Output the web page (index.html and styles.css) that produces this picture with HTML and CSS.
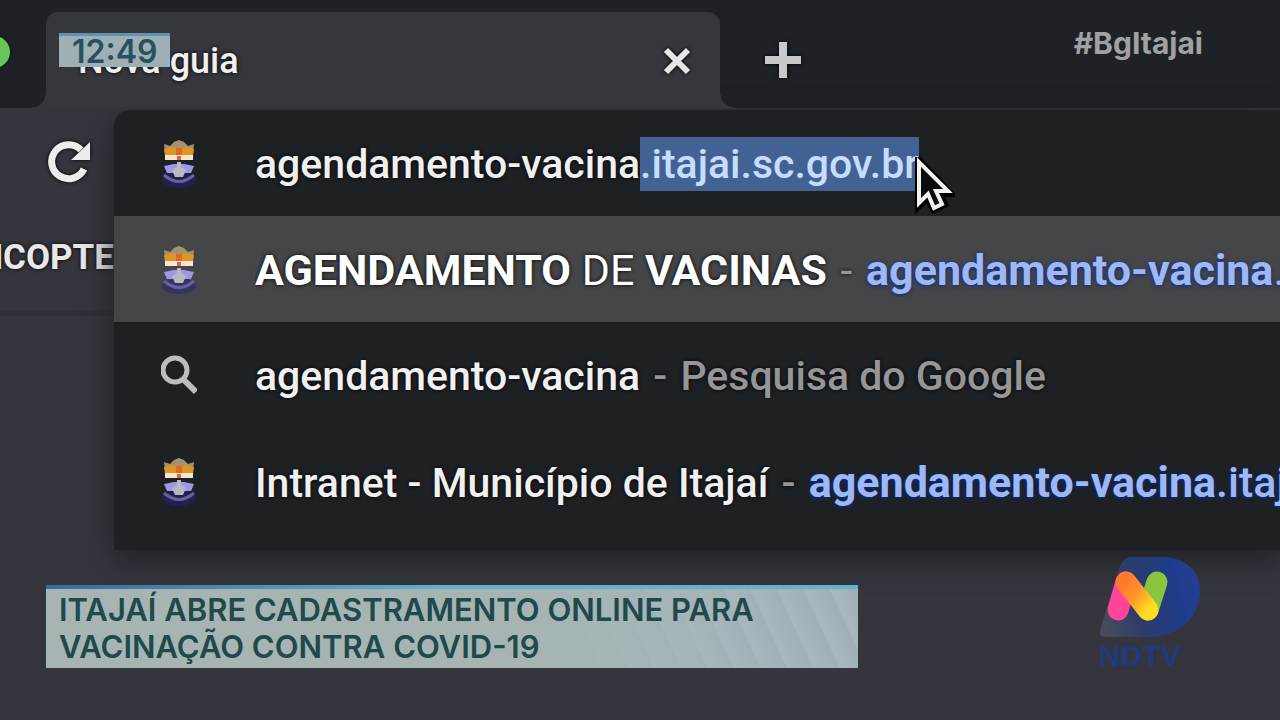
FILE: index.html
```
<!DOCTYPE html>
<html lang="pt-BR">

<head>
  <meta charset="UTF-8">
  <meta name="viewport" content="width=device-width, initial-scale=1.0">
  <title>Nova guia</title>
  <link rel="stylesheet" href="styles.css">
</head>

<body>
  <!-- brasão de Itajaí, usado como favicon -->
  <svg class="defs" width="0" height="0" aria-hidden="true">
    <symbol id="crest" viewBox="0 0 36 52">
      <ellipse cx="18" cy="42" rx="17" ry="8" fill="#25207a" opacity=".5" />
      <path d="M3 6l6 2 4-4 5-2 5 2 4 4 6-2-1 8H4z" fill="#a3936f" />
      <path d="M3 11l8-2 7 2 7-2 8 2-1 7H4z" fill="#dc9526" />
      <path d="M15 10h6v7h-6z" fill="#e2671a" />
      <path d="M4 17h28v5H4z" fill="#fbe5cf" />
      <path d="M16 18h4v4h-4z" fill="#d8674e" />
      <path d="M3 28l10-2h10l10 2-3 7H6z" fill="#9c9ae6" />
      <path d="M16 24h4v5l5 3-3 7h-8l-3-7 5-3z" fill="#b9b9c4" />
      <path d="M3 37q15 13 30 0" fill="none" stroke="#65629f" stroke-width="3" />
    </symbol>
  </svg>

  <div class="browser">
    <header class="tabstrip">
      <span class="maximize"></span>
      <div class="tab">
        <span class="tab-title">Nova guia</span>
        <button class="icon-btn" aria-label="Fechar guia">
          <svg width="30" height="30" viewBox="0 0 30 30">
            <path d="M4 4l22 22M26 4L4 26" stroke="#e6e6e6" stroke-width="6" />
          </svg>
        </button>
      </div>
      <button class="icon-btn new-tab" aria-label="Nova guia">
        <svg width="38" height="38" viewBox="0 0 38 38">
          <path d="M19 1v36M1 19h36" stroke="#c9c9c9" stroke-width="8" />
        </svg>
      </button>
    </header>

    <main class="content">
      <aside class="side">
        <button class="icon-btn reload" aria-label="Recarregar">
          <svg width="46" height="46" viewBox="0 0 46 46">
            <path d="M38 30A17 17 0 1 1 35 11" fill="none" stroke="#ececec" stroke-width="7" />
            <path d="M44 3v18H25z" fill="#ececec" />
          </svg>
        </button>
        <a class="bookmark" href="#">MCOPTE</a>
      </aside>

      <div class="omnibox">
        <div class="row">
          <svg class="icon"><use href="#crest" /></svg>
          <input id="url" class="url" type="text" aria-label="Endereço" value="agendamento-vacina.itajai.sc.gov.br" spellcheck="false" autofocus>
        </div>
        <a class="row active" href="#">
          <svg class="icon"><use href="#crest" /></svg>
          <span class="text"><b>AGENDAMENTO</b> DE <b>VACINAS</b> <i class="dash">-</i> <em><b>agendamento-vacina</b>.itajai.sc.gov.br</em></span>
        </a>
        <a class="row" href="#">
          <svg class="icon" viewBox="0 0 36 52">
            <circle cx="14" cy="20" r="12" fill="none" stroke="#bdbdbd" stroke-width="5" />
            <path d="M22 29l13 13" stroke="#bdbdbd" stroke-width="6" />
          </svg>
          <span class="text">agendamento-vacina <i class="dash">-</i> <i>Pesquisa do Google</i></span>
        </a>
        <a class="row" href="#">
          <svg class="icon"><use href="#crest" /></svg>
          <span class="text">Intranet - Município de Itajaí <i class="dash">-</i> <em><b>agendamento-vacina</b>.itajai.sc.gov.br</em></span>
        </a>
      </div>
    </main>

    <svg class="cursor" width="40" height="60" viewBox="0 0 40 60">
      <path d="M4 4v44l9-8 6 12 10-5-6-11h11z" fill="#0b0c10" stroke="#000" stroke-width="8" />
      <path d="M4 5v41l9-9 6 14 8-4-6-13h12z" fill="#0b0c10" stroke="#f2f2f2" stroke-width="4" />
    </svg>
  </div>

  <div class="clock">12:49</div>
  <div class="hashtag">#BgItajai</div>
  <h1 class="headline">ITAJAÍ ABRE CADASTRAMENTO ONLINE PARA<br>VACINAÇÃO CONTRA COVID-19</h1>

  <div class="logo">
    <svg width="102" height="82" viewBox="0 0 102 82">
      <defs>
        <linearGradient id="shape" x1="0" y1=".5" x2="1" y2=".3">
          <stop offset="0" stop-color="#454b5c" />
          <stop offset=".35" stop-color="#2b3c6b" />
          <stop offset=".75" stop-color="#1f3c8c" />
          <stop offset="1" stop-color="#243f94" />
        </linearGradient>
        <linearGradient id="bar" x1="0" y1="0" x2="1" y2="1">
          <stop offset="0" stop-color="#ff7a2c" />
          <stop offset=".5" stop-color="#ff9a2a" />
          <stop offset="1" stop-color="#ffdd1f" />
        </linearGradient>
      </defs>
      <path d="M32 1h30c24 0 39 14 39 33 0 28-22 47-51 47H6q-6 0-5-7L21 10q4-9 11-9z" fill="url(#shape)" />
      <g fill="none" stroke-width="21" stroke-linecap="round">
        <path d="M27 26L19 54" stroke="#ff4598" />
        <path d="M58 26L49 54" stroke="#8ac53e" />
        <path d="M27 26L49 54" stroke="url(#bar)" />
      </g>
    </svg>
    <span>NDTV</span>
  </div>

  <script>
    // seleciona o trecho completado automaticamente
    var url = document.getElementById('url');
    url.focus();
    url.setSelectionRange('agendamento-vacina'.length, url.value.length);
  </script>
</body>

</html>
```
FILE: styles.css
```
* {
  box-sizing: border-box;
}

body,
html {
  width: 100%;
  height: 100%;
  margin: 0;
  overflow: hidden;
  font-family: Roboto, "Liberation Sans", sans-serif;
}

.defs {
  position: absolute;
}

.browser {
  position: relative;
  min-height: 100%;
  background: #35353d;
}

.icon-btn {
  display: flex;
  padding: 0;
  border: 0;
  background: none;
}

.icon-btn svg {
  overflow: visible;
  filter: drop-shadow(0 0 2px #000);
}

.tabstrip {
  display: flex;
  align-items: center;
  height: 108px;
  padding-top: 12px;
  background: #1e2226;
}

.maximize {
  width: 32px;
  height: 32px;
  margin: 0 36px 16px -22px;
  border-radius: 50%;
  background: #68c658;
  box-shadow: 0 0 4px #0b1018;
}

.tab {
  position: relative;
  display: flex;
  align-items: center;
  justify-content: space-between;
  width: 674px;
  height: 96px;
  padding: 2px 28px 0 32px;
  border-radius: 12px 12px 0 0;
  background: #36373c;
}

/* curved feet of the tab */
.tab::before,
.tab::after {
  content: "";
  position: absolute;
  bottom: 0;
  width: 14px;
  height: 14px;
}

.tab::before {
  right: 100%;
  background: radial-gradient(circle at 0 0, transparent 13px, #36373c 14px);
}

.tab::after {
  left: 100%;
  background: radial-gradient(circle at 100% 0, transparent 13px, #36373c 14px);
}

.tab-title {
  color: #f0f0f0;
  font-size: 36px;
  font-weight: 500;
  text-shadow: 0 0 4px #000;
}

.new-tab {
  margin-left: 44px;
}

.content {
  display: flex;
}

.side {
  width: 114px;
  height: 208px;
  border-bottom: 6px solid #2f3036;
  overflow: hidden;
}

.reload {
  height: 108px;
  margin-left: 46px;
  align-items: center;
}

.bookmark {
  display: flex;
  justify-content: flex-end;
  color: #e8e8e8;
  font-size: 35px;
  font-weight: 700;
  line-height: 84px;
  text-decoration: none;
  text-shadow: 0 0 4px #000;
}

.omnibox {
  flex: 1;
  min-width: 0;
  margin-top: 2px;
  padding-bottom: 16px;
  border-radius: 16px 0 0 0;
  background: #1e2124;
  box-shadow: 0 10px 30px rgba(30, 31, 35, 0.9);
  overflow: hidden;
}

.row {
  display: flex;
  align-items: center;
  height: 106px;
  padding: 2px 0 0 47px;
  color: #f0f0f0;
  font-size: 41px;
  font-weight: 500;
  line-height: 54px;
  text-decoration: none;
  text-shadow: 0 0 4px #000;
  white-space: nowrap;
}

.row.active {
  background: #454648;
  color: #fff;
  font-size: 43px;
  font-weight: 400;
}

.icon {
  flex: none;
  width: 36px;
  height: 52px;
  margin-right: 58px;
}

.text {
  flex: 1;
  min-width: 0;
  overflow: hidden;
}

.url {
  flex: 1;
  min-width: 0;
  height: 54px;
  padding: 0;
  border: 0;
  outline: 0;
  background: none;
  color: inherit;
  font: inherit;
  text-shadow: inherit;
}

.url::selection {
  background: #436294;
  color: #c5deff;
  text-shadow: none;
}

.row b {
  font-weight: 700;
}

.row i {
  color: #969696;
  font-style: normal;
}

.row .dash {
  margin: 0 3px;
}

.row em {
  color: #9db8f5;
  font-size: 43px;
  font-style: normal;
  text-shadow: 0 1px 4px #0a2a86;
}

.cursor {
  position: absolute;
  top: 157px;
  left: 915px;
}

.clock {
  position: absolute;
  top: 33px;
  left: 59px;
  padding: 0 13px;
  border-top: 3px solid #5f93b5;
  background: #9fb0b4;
  color: #285062;
  font: 600 32px/31px Inter, sans-serif;
}

.hashtag {
  position: absolute;
  top: 28px;
  right: 77px;
  color: #a0a1a2;
  font: 700 30px/30px Inter, sans-serif;
}

.headline {
  position: absolute;
  top: 585px;
  left: 46px;
  width: 812px;
  margin: 0;
  padding: 6px 13px 3px;
  background:
    linear-gradient(90deg, #3c699b, #62b2cd 50%) top / 100% 4px no-repeat,
    linear-gradient(90deg, #a6b5b4 60%, transparent 100%),
    repeating-linear-gradient(65deg, #a8b8bf 0, #9eafb7 23px, #a8b8bf 24px);
  color: #20494b;
  font: 600 31px/37px Inter, sans-serif;
}

.logo {
  position: absolute;
  right: 79px;
  bottom: 46px;
  display: flex;
  flex-direction: column;
  color: #203a80;
  font: 700 30px/36px "Liberation Sans", sans-serif;
}
```
